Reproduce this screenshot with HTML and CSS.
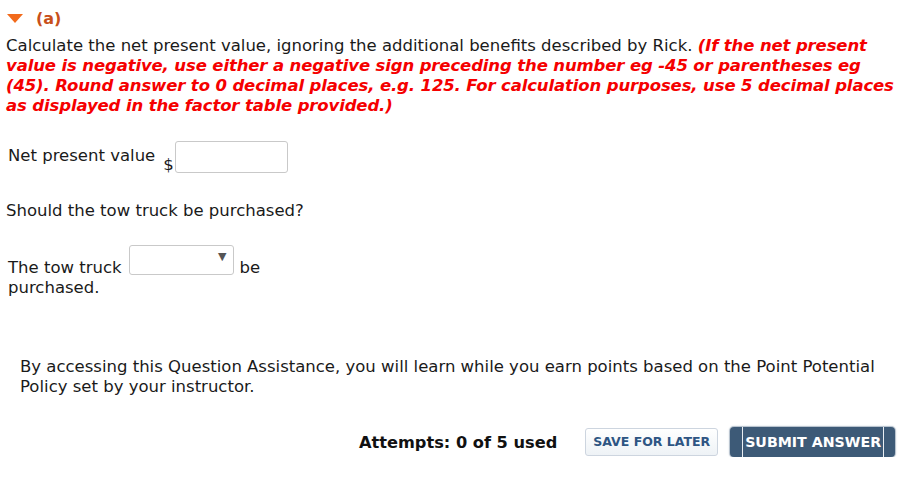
FILE: index.html
```html
<!DOCTYPE html>
<html>
<head>
<meta charset="utf-8">
<link rel="stylesheet" href="styles.css">
</head>
<body>
<div class="page">
  <div class="part-head">
    <svg class="caret" width="16" height="10" viewBox="0 0 16 10"><polygon points="0,0 16,0 8,9" fill="#f26a1b"/></svg>
    <span class="part-label">(a)</span>
  </div>
  <p class="question">Calculate the net present value, ignoring the additional benefits described by Rick. <em class="hint">(If the net present value is negative, use either a negative sign preceding the number eg -45 or parentheses eg (45). Round answer to 0 decimal places, e.g. 125. For calculation purposes, use 5 decimal places as displayed in the factor table provided.)</em></p>

  <div class="npv-row">
    <span class="npv-label">Net present value</span>
    <span class="dollar">$</span>
    <span class="text-input"></span>
  </div>

  <p class="question2">Should the tow truck be purchased?</p>

  <div class="truck-row">
    <span class="truck-text">The tow truck</span>
    <span class="select"><span class="arrow">▼</span></span>
    <span class="truck-text">be</span>
  </div>
  <div class="truck-row2">purchased.</div>

  <p class="assist">By accessing this Question Assistance, you will learn while you earn points based on the Point Potential Policy set by your instructor.</p>

  <div class="actions">
    <span class="attempts">Attempts: 0 of 5 used</span>
    <span class="btn-save">SAVE FOR LATER</span>
    <span class="btn-submit"><span class="btn-submit-inner">SUBMIT ANSWER</span></span>
  </div>
</div>
</body>
</html>
```

FILE: styles.css
```css
html, body {
  margin: 0;
  padding: 0;
  background: #fff;
}
.page {
  font-family: "DejaVu Sans", Verdana, sans-serif;
  font-size: 16.5px;
  color: #1a1a1a;
  padding: 8px 0 0 6px;
  width: 902px;
  box-sizing: border-box;
}
.part-head {
  display: flex;
  align-items: center;
  height: 20px;
  padding-left: 1px;
}
.caret {
  margin-top: 1px;
}
.part-label {
  color: #c8501a;
  font-weight: bold;
  margin-left: 13px;
  font-size: 16px;
}
.question {
  margin: 8px 0 0 0;
  line-height: 20px;
}
.hint {
  color: #f50000;
  font-weight: bold;
  font-style: italic;
  letter-spacing: -0.13px;
}
.npv-row {
  margin-top: 25px;
  display: flex;
  align-items: flex-start;
  padding-left: 2px;
  height: 32px;
}
.npv-label {
  margin-top: 5px;
}
.dollar {
  margin-left: 8px;
  margin-top: 15px;
  line-height: 18px;
}
.text-input {
  display: inline-block;
  width: 111px;
  height: 30px;
  border: 1px solid #c9c9c9;
  border-radius: 3px;
  margin-left: 1px;
}
.question2 {
  margin: 28px 0 0 0;
  line-height: 20px;
}
.truck-row {
  margin-top: 24px;
  display: flex;
  align-items: flex-start;
  padding-left: 2px;
  height: 31px;
}
.truck-text {
  margin-top: 13px;
  line-height: 20px;
}
.select {
  position: relative;
  display: inline-block;
  width: 103px;
  height: 28px;
  border: 1px solid #c9c9c9;
  border-radius: 3px;
  margin: 0 6px 0 7px;
}
.arrow {
  position: absolute;
  right: 6px;
  top: 4px;
  font-size: 11px;
  color: #555;
}
.truck-row2 {
  padding-left: 2px;
  line-height: 20px;
  margin-top: 2px;
}
.assist {
  margin: 59px 0 0 14px;
  line-height: 20px;
}
.actions {
  margin-top: 30px;
  display: flex;
  align-items: center;
  padding-left: 353px;
  width: 921px;
  box-sizing: border-box;
}
.attempts {
  font-weight: bold;
  font-size: 16.2px;
  color: #111;
}
.btn-save {
  margin-left: 28px;
  font-size: 12.5px;
  font-weight: bold;
  color: #2e5583;
  border: 1px solid #cdd5df;
  border-radius: 3px;
  background: linear-gradient(#ffffff, #eef2f6);
  padding: 0 7px;
  height: 26px;
  line-height: 26px;
}
.btn-submit {
  margin-left: 12px;
  border-radius: 4px;
  background: #3d5a77;
  box-shadow: 0 0 0 1px #b9c4cf, 0 0 2px 1px #d6dde4;
  height: 30px;
  padding: 0 11px 0 12px;
  display: flex;
  align-items: center;
  flex-shrink: 0;
}
.btn-submit-inner {
  color: #fff;
  font-family: "DejaVu Sans", Tahoma, sans-serif;
  font-weight: bold;
  font-size: 14.2px;
  border-left: 1px solid #e8edf2;
  border-right: 1px solid #e8edf2;
  padding: 0 2px 0 2px;
  height: 30px;
  line-height: 30px;
  white-space: nowrap;
}
```
